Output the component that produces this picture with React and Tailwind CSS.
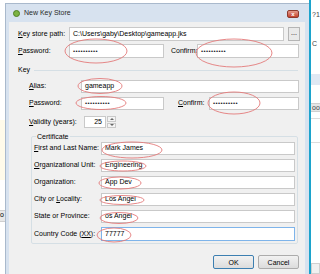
import React from 'react'

const dots = <span className="text-[6px] tracking-[0.4px] text-[#222]">••••••••••</span>

function Field({ w, h = 'h-[13px]', value, focus, className = '' }) {
  return (
    <div
      className={`${w} ${h} shrink-0 bg-white border ${focus ? 'border-[#7eb4ea]' : 'border-[#c9c9c9]'} flex items-center pl-[3px] overflow-hidden whitespace-nowrap ${className}`}
    >
      {value}
    </div>
  )
}

function Label({ w, children }) {
  return <div className={`${w} shrink-0 whitespace-nowrap`}>{children}</div>
}

function U({ children }) {
  return <span className="underline underline-offset-1">{children}</span>
}

function CertRow({ label, value, focus }) {
  return (
    <div className="flex items-center">
      <Label w="w-[67px]">{label}</Label>
      <Field w="w-[194px]" h={focus ? 'h-[14px]' : 'h-[13px]'} value={value} focus={focus} />
    </div>
  )
}

function TitleBar() {
  return (
    <div className="h-[18px] flex items-center pl-[7px] pr-[10px] justify-between">
      <div className="flex items-center gap-[4px]">
        <div className="w-[7px] h-[7px] rounded-full bg-[#7cb342] border border-[#4f7f22]" />
        <span className="text-[7px] text-[#2a2a2a]">New Key Store</span>
      </div>
      <div className="mt-[2px] w-[12px] h-[8px] rounded-[2px] bg-gradient-to-b from-[#e39a8c] to-[#c2402d] border border-[#8d3a2d] flex items-center justify-center text-white text-[6px] font-bold leading-none">
        x
      </div>
    </div>
  )
}

function Content() {
  return (
    <div className="ml-[3px] mr-[4px] flex-1 bg-[#f0f0f0] flex flex-col">
      {/* store */}
      <div className="flex items-center mt-[5px] pl-[9px]">
        <Label w="w-[51px]"><U>K</U>ey store path:</Label>
        <Field w="w-[215px]" h="h-[14px]" value="C:\Users\gaby\Desktop\gameapp.jks" />
        <div className="ml-[4px] w-[12px] h-[14px] border border-[#b5b5b5] bg-[#e9e9e9] flex items-center justify-center leading-none pb-[3px]">...</div>
      </div>
      <div className="flex items-center mt-[3px] pl-[9px]">
        <Label w="w-[51px]"><U>P</U>assword:</Label>
        <Field w="w-[95px]" h="h-[14px]" value={dots} />
        <div className="ml-[7px]"><Label w="w-[26px]">Confirm:</Label></div>
        <Field w="w-[102px]" h="h-[14px]" value={dots} />
      </div>

      {/* key */}
      <div className="flex items-center mt-[6px] h-[12px] pl-[9px] pr-[7px]">
        <span>Key</span>
        <div className="flex-1 ml-[4px] h-px bg-[#d5dfe5]" />
      </div>
      <div className="flex items-center mt-[4px] pl-[20px]">
        <Label w="w-[52px]"><U>A</U>lias:</Label>
        <Field w="w-[218px]" value="gameapp" />
      </div>
      <div className="flex items-center mt-[4px] pl-[20px]">
        <Label w="w-[52px]"><U>P</U>assword:</Label>
        <Field w="w-[83px]" value={dots} />
        <div className="ml-[14px]"><Label w="w-[31px]"><U>C</U>onfirm:</Label></div>
        <Field w="w-[90px]" value={dots} />
      </div>
      <div className="flex items-center mt-[6px] pl-[20px]">
        <Label w="w-[55px]"><U>V</U>alidity (years):</Label>
        <Field w="w-[22px]" h="h-[12px]" value={<span className="w-full text-right pr-[3px]">25</span>} />
        <div className="ml-px w-[9px] h-[12px] flex flex-col gap-px">
          <div className="flex-1 border border-[#c9c9c9] bg-[#f4f4f4] flex items-center justify-center">
            <div className="w-0 h-0 border-x-[2px] border-x-transparent border-b-[2px] border-b-[#666]" />
          </div>
          <div className="flex-1 border border-[#c9c9c9] bg-[#f4f4f4] flex items-center justify-center">
            <div className="w-0 h-0 border-x-[2px] border-x-transparent border-t-[2px] border-t-[#666]" />
          </div>
        </div>
      </div>

      {/* certificate */}
      <fieldset className="ml-[22px] w-[267px] mt-[4px] border border-[#d5dfe5] rounded-[2px] pl-[2px] pt-px pb-[2px] flex flex-col gap-[4px]">
        <legend className="ml-[2px] px-px leading-[9px]">Certificate</legend>
        <CertRow label={<><U>F</U>irst and Last Name:</>} value="Mark James" />
        <CertRow label={<><U>O</U>rganizational Unit:</>} value="Engineering" />
        <CertRow label="Organization:" value="App Dev" />
        <CertRow label={<>City or <U>L</U>ocality:</>} value="Los Angel" />
        <CertRow label="State or Province:" value="os Angel" />
        <CertRow label={<>Country Code (<U>XX</U>):</>} value="77777" focus />
      </fieldset>

      <div className="flex justify-end gap-[4px] mt-[11px] pr-[6px]">
        <button className="w-[41px] h-[14px] border border-[#3c7fb1] bg-gradient-to-b from-[#f2f2f2] to-[#dcdcdc] rounded-[2px] leading-none text-[7px]">OK</button>
        <button className="w-[41px] h-[14px] border border-[#acacac] bg-gradient-to-b from-[#f2f2f2] to-[#dcdcdc] rounded-[2px] leading-none text-[7px]">Cancel</button>
      </div>
    </div>
  )
}

function RightEdge() {
  return (
    <div className="w-[11px] flex shrink-0">
      <div className="w-[2px] bg-[#1ca3cc]" />
      <div className="flex-1 flex flex-col bg-white text-[7px] text-[#444] leading-none">
        <div className="mt-[11px] ml-px">?1</div>
        <div className="mt-[22px] ml-px">C</div>
        <div className="mt-[27px] h-[12px] bg-[#dfe8f3]" />
        <div className="mt-[18px] h-[10px] bg-[#e6e6e6] border-y border-[#cfcfcf] pl-px">oo</div>
        <div className="mt-[6px] h-[28px] border-y border-[#dcdcdc]" />
        <div className="mt-[120px] h-[12px] border border-[#d0d0d0] bg-[#f0f0f0]" />
      </div>
    </div>
  )
}

function LeftEdge() {
  return (
    <div className="w-[5px] shrink-0 flex flex-col text-[7px] leading-none">
      <div className="mt-[120px] h-[60px] bg-[#fffbea]" />
      <div className="mt-[30px] h-[12px] bg-[#e8e8e8] border-y border-[#cfcfcf] overflow-hidden">o</div>
    </div>
  )
}

const marks = [
  [96, 51, 31, 12],
  [234, 53, 38, 14],
  [100, 86, 22, 7.5],
  [101, 103, 25, 6.5],
  [234, 103, 26, 11],
  [132, 150, 30, 8],
  [123, 166, 23, 5],
  [120, 183, 21, 6],
  [122, 200, 22, 4.5],
  [119, 218, 19, 5.5],
  [114, 235, 17, 7],
]

export default function App() {
  return (
    <div className="relative w-[320px] h-[274px] overflow-hidden bg-white flex font-['Liberation_Sans',Arial,sans-serif] text-[7px] text-black">
      <LeftEdge />
      <div className="mt-[3px] w-[304px] shrink-0 bg-[#d7e2ef] border-l border-t border-[#a9b9cc] flex flex-col">
        <TitleBar />
        <Content />
      </div>
      <RightEdge />
      <svg className="absolute inset-0 pointer-events-none" width="320" height="274">
        {marks.map(([cx, cy, rx, ry], i) => (
          <ellipse key={i} cx={cx} cy={cy} rx={rx} ry={ry} fill="none" stroke="#e37b7b" strokeWidth="0.9" />
        ))}
      </svg>
    </div>
  )
}
